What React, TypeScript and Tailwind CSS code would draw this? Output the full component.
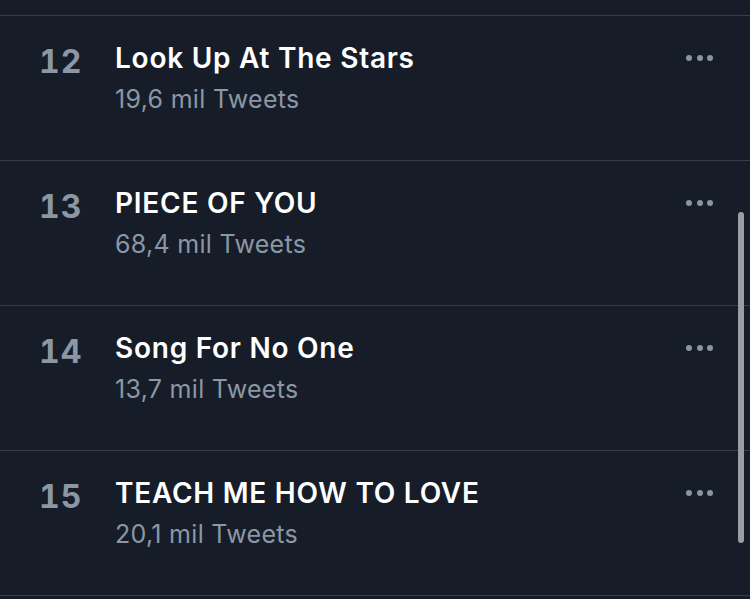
import React from 'react';

const trends = [
  { rank: 12, title: 'Look Up At The Stars', count: '19,6 mil Tweets' },
  { rank: 13, title: 'PIECE OF YOU', count: '68,4 mil Tweets' },
  { rank: 14, title: 'Song For No One', count: '13,7 mil Tweets' },
  { rank: 15, title: 'TEACH ME HOW TO LOVE', count: '20,1 mil Tweets' },
];

const Dots: React.FC = () => (
  <div className="mt-[14px] flex gap-[4.5px] pr-[37px]">
    <span className="h-[6px] w-[6px] rounded-full bg-[#8b95a1]" />
    <span className="h-[6px] w-[6px] rounded-full bg-[#8b95a1]" />
    <span className="h-[6px] w-[6px] rounded-full bg-[#8b95a1]" />
  </div>
);

export default function App() {
  return (
    <div
      className="relative h-[599px] w-[750px] overflow-hidden bg-[#161d28] pt-[15px]"
      style={{ fontFamily: 'Inter, "Noto Sans", sans-serif' }}
    >
      <div className="border-b border-[#363d48]">
        {trends.map((t) => (
          <div key={t.rank} className="flex h-[145px] items-start border-t border-[#363d48] pt-[25px]">
            <div className="mt-[2px] w-[115px] pl-[39px] text-[32px] font-bold leading-[38px] tracking-[1px] tabular-nums text-[#8b97a4]">
              {t.rank}
            </div>
            <div className="flex-1">
              <div className="text-[28px] font-semibold leading-[34px] tracking-[0.75px] text-white">{t.title}</div>
              <div className="mt-[9px] text-[25px] leading-[30px] tracking-[0.3px] text-[#8b97a4]">{t.count}</div>
            </div>
            <Dots />
          </div>
        ))}
      </div>
      <div className="absolute right-[6px] top-[212px] h-[331px] w-[6px] rounded-full bg-[#9a9da2]" />
    </div>
  );
}
